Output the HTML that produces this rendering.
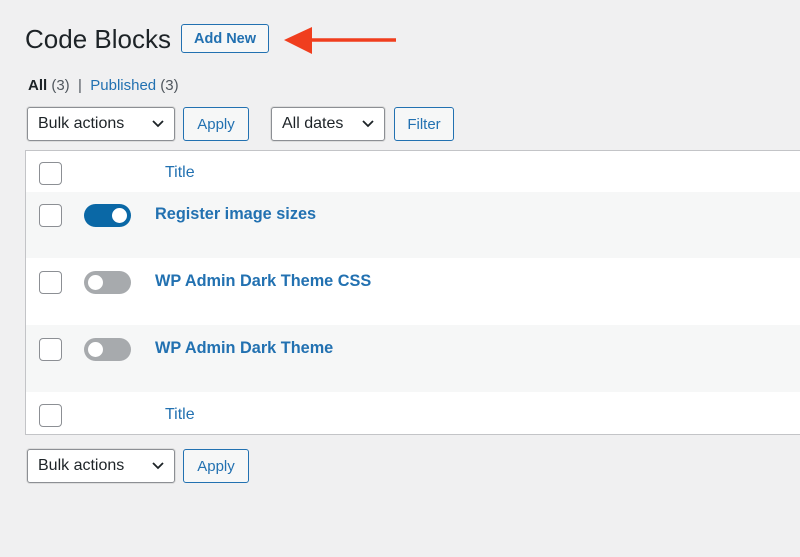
<!DOCTYPE html>
<html><head><style>
*{box-sizing:border-box;margin:0;padding:0}
body{width:800px;height:557px;background:#f0f0f1;font-family:"Liberation Sans",sans-serif;position:relative;overflow:hidden;color:#1d2327}
.a{position:absolute}
.btn{position:absolute;border:1px solid #2271b1;border-radius:3px;color:#2271b1;background:#f6f7f7;font-size:15px;display:flex;align-items:center;justify-content:center}
.sel{position:absolute;border:1px solid #8c8f94;border-radius:3px;background:#fff;font-size:16px;display:flex;align-items:center;padding-left:10px;color:#1d2327;box-shadow:0 0 0 1px #ddd}
.sel svg{position:absolute;right:10px;top:50%;margin-top:-4px}
.cb{position:absolute;left:39px;width:23px;height:23px;border:1px solid #8c8f94;border-radius:4px;background:#fff}
.tg{position:absolute;left:84px;width:47px;height:23px;border-radius:12px;background:#a7aaad}
.tg i{position:absolute;top:4px;width:15px;height:15px;border-radius:50%;background:#fff;left:4px}
.tg.on{background:#0a68a6}.tg.on i{left:28px}
.row{position:absolute;left:26px;width:774px}
.ttl{position:absolute;left:155px;font-size:16.3px;font-weight:bold;color:#2271b1}
.hd{position:absolute;left:165px;font-size:16px;color:#2271b1}
</style></head><body>
<div class="a" style="left:25px;top:24px;font-size:26px;color:#1d2327">Code Blocks</div>
<div class="btn" style="left:181px;top:24px;width:88px;height:29px;font-weight:bold;font-size:14.5px">Add New</div>
<svg class="a" style="left:283px;top:26px" width="115" height="30"><line x1="20" y1="14" x2="113" y2="14" stroke="#f03e1e" stroke-width="3.5"/><polygon points="1,14 29,1 29,28" fill="#f03e1e"/></svg>
<div class="a" style="left:28px;top:77px;font-size:15px;color:#50575e"><b style="color:#1d2327">All</b> (3) &nbsp;| &nbsp;<span style="color:#2271b1">Published</span> (3)</div>
<div class="sel" style="left:27px;top:107px;width:148px;height:34px">Bulk actions<svg width="12" height="8"><path d="M1 1l5 5 5-5" stroke="#1d2327" stroke-width="1.8" fill="none"/></svg></div>
<div class="btn" style="left:183px;top:107px;width:66px;height:34px">Apply</div>
<div class="sel" style="left:271px;top:107px;width:114px;height:34px">All dates<svg width="12" height="8"><path d="M1 1l5 5 5-5" stroke="#1d2327" stroke-width="1.8" fill="none"/></svg></div>
<div class="btn" style="left:394px;top:107px;width:60px;height:34px">Filter</div>
<div class="a" style="left:25px;top:150px;width:780px;height:285px;border:1px solid #c3c4c7;background:#fff"></div>
<div class="row" style="top:192px;height:66px;background:#f6f7f7"></div>
<div class="row" style="top:325px;height:67px;background:#f6f7f7"></div>
<div class="cb" style="top:162px"></div><div class="hd" style="top:164px">Title</div>
<div class="cb" style="top:204px"></div><div class="tg on" style="top:204px"><i></i></div><div class="ttl" style="top:205px">Register image sizes</div>
<div class="cb" style="top:271px"></div><div class="tg" style="top:271px"><i></i></div><div class="ttl" style="top:272px">WP Admin Dark Theme CSS</div>
<div class="cb" style="top:338px"></div><div class="tg" style="top:338px"><i></i></div><div class="ttl" style="top:339px">WP Admin Dark Theme</div>
<div class="cb" style="top:404px"></div><div class="hd" style="top:406px">Title</div>
<div class="sel" style="left:27px;top:449px;width:148px;height:34px">Bulk actions<svg width="12" height="8"><path d="M1 1l5 5 5-5" stroke="#1d2327" stroke-width="1.8" fill="none"/></svg></div>
<div class="btn" style="left:183px;top:449px;width:66px;height:34px">Apply</div>
</body></html>
